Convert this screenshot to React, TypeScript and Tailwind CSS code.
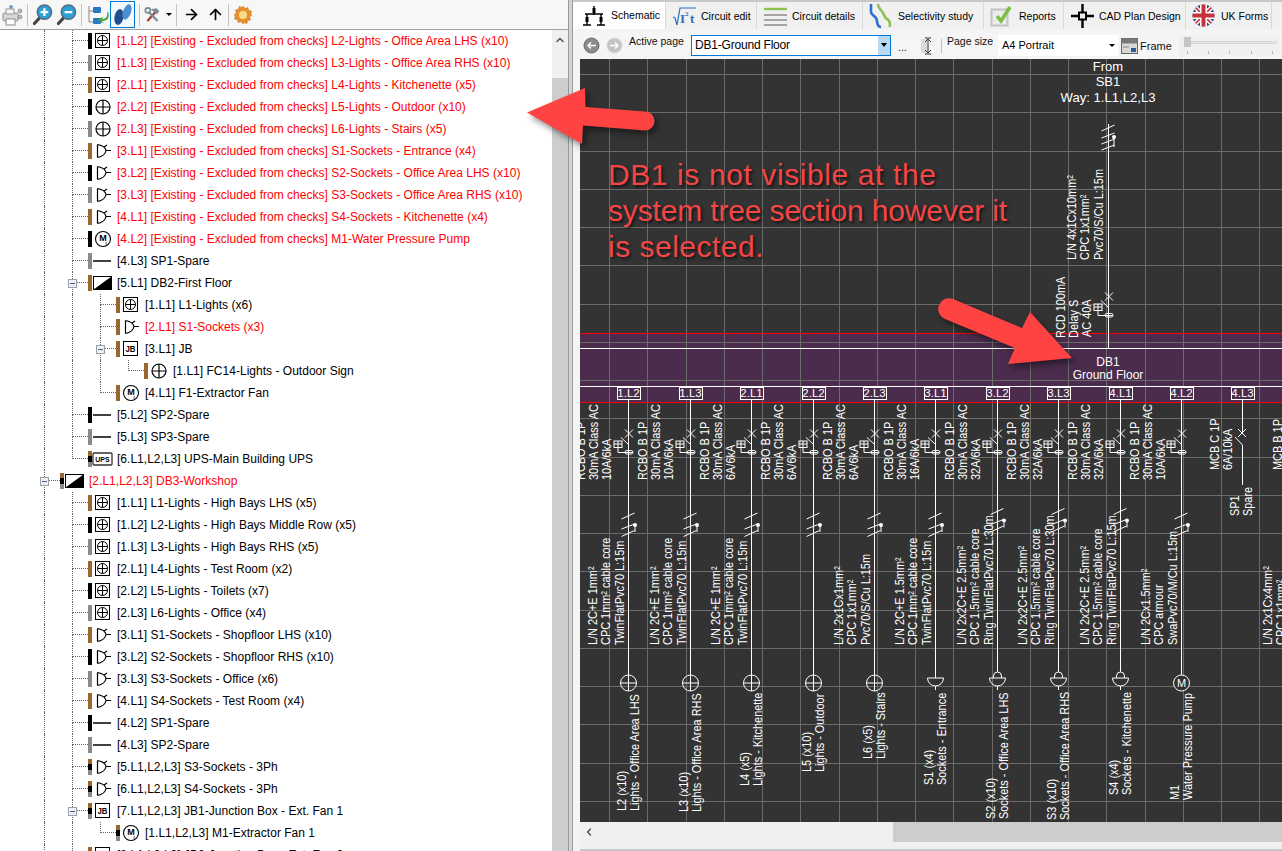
import React from "react";
import { ArrowRight, ArrowUp, ChevronUp, ChevronLeft, Minus } from "lucide-react";

type Phase = "1" | "2" | "3" | "s";
type Kind = "boxlamp" | "lamp" | "socket" | "motor" | "spare" | "db" | "jb" | "ups";
type Row = { d: number; p: Phase; k: Kind; t: string; red?: boolean; exp?: boolean; last?: boolean };

const ex = "[Existing - Excluded from checks] ";
const rows: Row[] = [
  { d: 2, p: "2", k: "boxlamp", red: true, t: `[1.L2] ${ex}L2-Lights - Office Area LHS (x10)` },
  { d: 2, p: "3", k: "boxlamp", red: true, t: `[1.L3] ${ex}L3-Lights - Office Area RHS (x10)` },
  { d: 2, p: "1", k: "boxlamp", red: true, t: `[2.L1] ${ex}L4-Lights - Kitchenette (x5)` },
  { d: 2, p: "2", k: "lamp", red: true, t: `[2.L2] ${ex}L5-Lights - Outdoor (x10)` },
  { d: 2, p: "3", k: "lamp", red: true, t: `[2.L3] ${ex}L6-Lights - Stairs (x5)` },
  { d: 2, p: "1", k: "socket", red: true, t: `[3.L1] ${ex}S1-Sockets - Entrance (x4)` },
  { d: 2, p: "2", k: "socket", red: true, t: `[3.L2] ${ex}S2-Sockets - Office Area LHS (x10)` },
  { d: 2, p: "3", k: "socket", red: true, t: `[3.L3] ${ex}S3-Sockets - Office Area RHS (x10)` },
  { d: 2, p: "1", k: "socket", red: true, t: `[4.L1] ${ex}S4-Sockets - Kitchenette (x4)` },
  { d: 2, p: "2", k: "motor", red: true, t: `[4.L2] ${ex}M1-Water Pressure Pump` },
  { d: 2, p: "3", k: "spare", t: "[4.L3] SP1-Spare" },
  { d: 2, p: "1", k: "db", exp: true, t: "[5.L1] DB2-First Floor" },
  { d: 3, p: "1", k: "boxlamp", t: "[1.L1] L1-Lights (x6)" },
  { d: 3, p: "1", k: "socket", red: true, t: "[2.L1] S1-Sockets (x3)" },
  { d: 3, p: "1", k: "jb", exp: true, t: "[3.L1] JB" },
  { d: 4, p: "1", k: "lamp", last: true, t: "[1.L1] FC14-Lights - Outdoor Sign" },
  { d: 3, p: "1", k: "motor", last: true, t: "[4.L1] F1-Extractor Fan" },
  { d: 2, p: "2", k: "spare", t: "[5.L2] SP2-Spare" },
  { d: 2, p: "3", k: "spare", t: "[5.L3] SP3-Spare" },
  { d: 2, p: "s", k: "ups", last: true, t: "[6.L1,L2,L3] UPS-Main Building UPS" },
  { d: 1, p: "s", k: "db", exp: true, red: true, t: "[2.L1,L2,L3] DB3-Workshop" },
  { d: 2, p: "1", k: "boxlamp", t: "[1.L1] L1-Lights - High Bays LHS (x5)" },
  { d: 2, p: "2", k: "boxlamp", t: "[1.L2] L2-Lights - High Bays Middle Row (x5)" },
  { d: 2, p: "3", k: "boxlamp", t: "[1.L3] L3-Lights - High Bays RHS (x5)" },
  { d: 2, p: "1", k: "boxlamp", t: "[2.L1] L4-Lights - Test Room (x2)" },
  { d: 2, p: "2", k: "boxlamp", t: "[2.L2] L5-Lights - Toilets (x7)" },
  { d: 2, p: "3", k: "boxlamp", t: "[2.L3] L6-Lights - Office (x4)" },
  { d: 2, p: "1", k: "socket", t: "[3.L1] S1-Sockets - Shopfloor LHS (x10)" },
  { d: 2, p: "2", k: "socket", t: "[3.L2] S2-Sockets - Shopfloor RHS (x10)" },
  { d: 2, p: "3", k: "socket", t: "[3.L3] S3-Sockets - Office (x6)" },
  { d: 2, p: "1", k: "socket", t: "[4.L1] S4-Sockets - Test Room (x4)" },
  { d: 2, p: "2", k: "spare", t: "[4.L2] SP1-Spare" },
  { d: 2, p: "3", k: "spare", t: "[4.L3] SP2-Spare" },
  { d: 2, p: "s", k: "socket", t: "[5.L1,L2,L3] S3-Sockets - 3Ph" },
  { d: 2, p: "s", k: "socket", t: "[6.L1,L2,L3] S4-Sockets - 3Ph" },
  { d: 2, p: "s", k: "jb", exp: true, t: "[7.L1,L2,L3] JB1-Junction Box - Ext. Fan 1" },
  { d: 3, p: "s", k: "motor", last: true, t: "[1.L1,L2,L3] M1-Extractor Fan 1" },
  { d: 2, p: "s", k: "jb", exp: true, t: "[8.L1,L2,L3] JB2-Junction Box - Ext. Fan 2" },
];

function PhaseBar({ p }: { p: Phase }) {
  if (p === "s")
    return (
      <span className="flex h-[16px] w-[4px] shrink-0 flex-col self-center">
        <span className="flex-1 bg-[#9c6633]" />
        <span className="flex-1 bg-black" />
        <span className="flex-1 bg-[#8a8a8a]" />
      </span>
    );
  const c = p === "1" ? "bg-[#9c6633]" : p === "2" ? "bg-black" : "bg-[#8a8a8a]";
  return <span className={`h-[16px] w-[4px] shrink-0 self-center ${c}`} />;
}

function TreeIcon({ k }: { k: Kind }) {
  const s = { fill: "none", stroke: "#000", strokeWidth: 1 };
  return (
    <svg width="22" height="18" viewBox="0 0 22 18" className="shrink-0">
      {k === "boxlamp" && (
        <g {...s}>
          <rect x="2.5" y="1.5" width="14" height="14" />
          <circle cx="9.5" cy="8.5" r="5" />
          <path d="M9.5 3.5v10M4.5 8.5h10" />
        </g>
      )}
      {k === "lamp" && (
        <g {...s} strokeWidth={1.2}>
          <circle cx="10" cy="9" r="7" />
          <path d="M10 2v14M3 9h14" />
        </g>
      )}
      {k === "socket" && (
        <g {...s} strokeWidth={1.2}>
          <path d="M4.5 2.5v13M4.5 2.5c5 1 8 3 8.5 6-.5 3-3.500 6-8.500 7" />
          <path d="M13 8.500h5M11 5l3-2" />
        </g>
      )}
      {k === "motor" && (
        <g>
          <circle cx="10" cy="9" r="7.500" fill="none" stroke="#000" strokeWidth="1.100" />
          <text x="10" y="11" textAnchor="middle" fontSize="9" fontWeight="700" fill="#000">M</text>
          <text x="13" y="15" textAnchor="middle" fontSize="4" fill="#000">3</text>
        </g>
      )}
      {k === "spare" && <path d="M0 9h18" stroke="#000" strokeWidth="1.500" />}
      {k === "db" && (
        <g>
          <rect x="1.500" y="2.500" width="18" height="13" fill="#fff" stroke="#000" />
          <path d="M1.500 15.500L19.500 2.500V15.500Z" fill="#000" />
        </g>
      )}
      {k === "jb" && (
        <g>
          <rect x="2.500" y="1.500" width="14" height="14" fill="#fff" stroke="#000" />
          <text x="9.500" y="12" textAnchor="middle" fontSize="9.500" fontWeight="700" fill="#000" textLength="10" lengthAdjust="spacingAndGlyphs">JB</text>
        </g>
      )}
      {k === "ups" && (
        <g>
          <rect x="1" y="3" width="19" height="12" rx="1" fill="#fff" stroke="#333" strokeWidth="1.300" />
          <text x="10.500" y="11.500" textAnchor="middle" fontSize="7" fontWeight="700" fill="#000">UPS</text>
        </g>
      )}
    </svg>
  );
}

function TreeRow({ r }: { r: Row }) {
  const guide = "border-l border-dotted border-[#666]";
  return (
    <div className="flex h-[22px] pl-[44px]">
      {Array.from({ length: r.d - 1 }).map((_, i) => (
        <span key={i} className={`w-[28px] shrink-0 ${guide}`} />
      ))}
      <span className="relative flex w-[16px] shrink-0 flex-col">
        <span className={`h-[11px] border-b ${guide}`} />
        {!r.last && <span className={`h-[11px] ${guide}`} />}
        {r.exp && (
          <span className="absolute left-[-4px] top-[7px] flex h-[9px] w-[9px] items-center justify-center border border-[#9aa0a8] bg-[#eef0f4]">
            <Minus size={7} strokeWidth={3} className="text-[#33457a]" />
          </span>
        )}
      </span>
      <PhaseBar p={r.p} />
      <span className={`flex shrink-0 items-center ${r.k === "db" || r.k === "ups" ? "w-[25px] pl-[0px]" : "w-[25px] pl-[1px]"}`}>
        <TreeIcon k={r.k} />
      </span>
      <span className={`whitespace-nowrap text-[12px] leading-[22px] tracking-[0.02px] ${r.red ? "text-[#ff0000]" : "text-black"}`}>{r.t}</span>
    </div>
  );
}

function Sep() {
  return <span className="mx-[4px] h-[22px] w-px shrink-0 bg-[#c4c4c4]" />;
}

function Magnifier({ plus }: { plus: boolean }) {
  return (
    <svg width="21" height="24" viewBox="0 0 22 24">
      <path d="M8 15L2.500 21" stroke="#444" strokeWidth="3.200" strokeLinecap="round" />
      <circle cx="13" cy="9" r="7.500" fill="#2f9fd8" stroke="#5c6b75" strokeWidth="1.600" />
      <path d={plus ? "M9 9h8M13 5v8" : "M9 9h8"} stroke="#fff" strokeWidth="2.400" />
    </svg>
  );
}

function LeftToolbar() {
  return (
    <div className="flex h-[30px] shrink-0 items-center border-b border-[#a0a0a0] bg-[#f7f7f7] pl-[2px]">
      <svg width="21" height="22" viewBox="0 0 21 22">
        <rect x="1" y="9" width="15" height="8" rx="1.500" fill="#d8d8d8" stroke="#8a8a8a" />
        <rect x="4" y="15" width="9" height="6" fill="#fff" stroke="#8a8a8a" />
        <rect x="4" y="5" width="8" height="5" fill="#f5f5f5" stroke="#9a9a9a" />
        <circle cx="9" cy="3" r="2" fill="#6aa7d8" />
        <circle cx="18" cy="7" r="2" fill="#bcbcbc" stroke="#777" strokeWidth=".6" />
        <circle cx="18" cy="13" r="2" fill="#bcbcbc" stroke="#777" strokeWidth=".6" />
      </svg>
      <Sep />
      <Magnifier plus />
      <span className="w-[3px]" />
      <Magnifier plus={false} />
      <Sep />
      <svg width="24" height="24" viewBox="0 0 24 24">
        <path d="M3 3v16M3 8h5M3 19h5" stroke="#8a8a8a" fill="none" />
        <rect x="7" y="4" width="8" height="6" rx="1" fill="#2a78c8" />
        <rect x="7" y="15" width="8" height="6" rx="1" fill="#2a78c8" />
        <path d="M21 9c1 5-1 7-5 7l1.500-2.500-6 3.500 6 3.500L16 18c6 0 8-4 6-9z" fill="#3fa535" />
      </svg>
      <span className="flex h-[27px] w-[25px] shrink-0 items-center justify-center border border-[#0078d7] bg-[#f3f8fd]">
        <svg width="22" height="24" viewBox="0 0 22 24">
          <ellipse cx="7" cy="14" rx="4.500" ry="8" transform="rotate(12 7 14)" fill="#1f4f8f" />
          <ellipse cx="15" cy="9" rx="4" ry="8" transform="rotate(20 15 9)" fill="#4f8fd0" />
        </svg>
      </span>
      <Sep />
      <svg width="17" height="18" viewBox="0 0 20 20">
        <path d="M4 17L13 7" stroke="#a33c2a" strokeWidth="2.600" />
        <path d="M9 3l6-1 3 4-3 3-6-5z" fill="#7a8a96" />
        <path d="M16 17L6 7" stroke="#7a8a96" strokeWidth="2.600" />
        <circle cx="4.500" cy="4.500" r="3" fill="none" stroke="#7a8a96" strokeWidth="2" />
      </svg>
      <span className="ml-[5px] h-0 w-0 border-x-[3px] border-t-[3px] border-x-transparent border-t-black" />
      <Sep />
      <ArrowRight size={17} strokeWidth={2.400} className="ml-[2px] text-black" />
      <span className="w-[7px]" />
      <ArrowUp size={17} strokeWidth={2.400} className="text-black" />
      <Sep />
      <svg width="18" height="18" viewBox="0 0 18 18" className="ml-[1px]">
        <path d="M9 0l2 2.500 3-1 .5 3 3 .5-1 3L18 9l-2.500 2 1 3-3 .5-.5 3-3-1L9 18l-2-2.500-3 1-.5-3-3-.5 1-3L0 9l2.500-2-1-3 3-.5.5-3 3 1z" fill="#e8912a" stroke="#b86a12" strokeWidth=".5" />
        <circle cx="9" cy="9" r="4" fill="#fbd98a" />
      </svg>
    </div>
  );
}

function Tab({ label, icon, active, w }: { label: string; icon: React.ReactNode; active?: boolean; w: string }) {
  return (
    <div className={`flex shrink-0 items-center border-r border-[#d9d9d9] ${w} ${active ? "h-[31px] bg-white pl-[9px]" : "h-[27px] bg-[#f0f0f0] pl-[6px]"}`}>
      <span className={`flex w-[29px] shrink-0 items-center ${active ? "mb-[4px]" : ""}`}>{icon}</span>
      <span className={`whitespace-nowrap text-[10.5px] text-black ${active ? "mb-[4px]" : "mt-[3px]"}`}>{label}</span>
    </div>
  );
}

function TabBar() {
  return (
    <div className="h-[29px] shrink-0 border-t-[2px] border-[#c8c8c8] bg-[#f0f0f0]">
      <div className="flex items-start">
        <Tab active w="w-[93px]" label="Schematic" icon={
          <svg width="24" height="22" viewBox="0 0 24 22">
            <path d="M12 1v9M3 9h18M5 9v11M19 9v11M1 20h8M15 20h8" stroke="#000" strokeWidth="1.400" fill="none" />
            <rect x="10.500" y="3" width="3" height="5" fill="#000" />
            <rect x="3.500" y="12" width="3" height="5" fill="#000" />
            <rect x="17.500" y="12" width="3" height="5" fill="#000" />
          </svg>} />
        <Tab w="w-[91px]" label="Circuit edit" icon={
          <svg width="26" height="20" viewBox="0 0 26 20">
            <path d="M1 11l2 1 2 7 3-17h16" stroke="#2a6fb8" strokeWidth="1.200" fill="none" />
            <text x="8" y="17" fontSize="13" fontWeight="700" fill="#2a6fb8" fontFamily="'Liberation Serif',serif">I</text>
            <text x="13" y="10" fontSize="7" fontWeight="700" fill="#2a6fb8" fontFamily="'Liberation Serif',serif">2</text>
            <text x="18" y="17" fontSize="13" fontWeight="700" fill="#2a6fb8" fontFamily="'Liberation Serif',serif">t</text>
          </svg>} />
        <Tab w="w-[106px]" label="Circuit details" icon={
          <svg width="24" height="20" viewBox="0 0 24 20">
            <path d="M1 3h23" stroke="#8dc24f" strokeWidth="2.400" />
            <path d="M1 9h23M1 14h23M1 19h23" stroke="#a5a5a5" strokeWidth="2" />
          </svg>} />
        <Tab w="w-[121px]" label="Selectivity study" icon={
          <svg width="24" height="26" viewBox="0 0 24 26">
            <path d="M2 1v8c0 3 3 3 5 6s0 9 5 9" stroke="#2f6fd0" strokeWidth="2.600" fill="none" />
            <path d="M9 1c0 5 3 5 5 9s2 5 4 6 3 2 3 8" stroke="#8dc24f" strokeWidth="2.600" fill="none" />
          </svg>} />
        <Tab w="w-[80px]" label="Reports" icon={
          <svg width="24" height="22" viewBox="0 0 24 22">
            <rect x="1.500" y="4.500" width="16" height="16" fill="#ececec" stroke="#c2c2c2" strokeWidth="2" />
            <path d="M7 11l4 5 9-14" stroke="#79c043" strokeWidth="3.600" fill="none" />
          </svg>} />
        <Tab w="w-[122px]" label="CAD Plan Design" icon={
          <svg width="25" height="24" viewBox="0 0 25 24">
            <path d="M12.500 0v8M12.500 16v8M1 12h7.500M16.500 12H24" stroke="#000" strokeWidth="2.400" />
            <rect x="9" y="8.500" width="7" height="7" fill="none" stroke="#000" strokeWidth="2" />
          </svg>} />
        <Tab w="w-[86px]" label="UK Forms" icon={
          <svg width="23" height="23" viewBox="0 0 23 23">
            <defs><clipPath id="ukc"><circle cx="11.500" cy="11.500" r="11" /></clipPath></defs>
            <g clipPath="url(#ukc)">
              <rect width="23" height="23" fill="#2a4a8a" />
              <path d="M0 0L23 23M23 0L0 23" stroke="#fff" strokeWidth="4.500" />
              <path d="M0 0L23 23M23 0L0 23" stroke="#c8303a" strokeWidth="1.600" />
              <path d="M11.500 0v23M0 11.500h23" stroke="#fff" strokeWidth="7" />
              <path d="M11.500 0v23M0 11.500h23" stroke="#c8303a" strokeWidth="4" />
            </g>
          </svg>} />
      </div>
    </div>
  );
}

function NavCircle({ faded }: { faded?: boolean }) {
  return (
    <svg width="17" height="17" viewBox="0 0 17 17">
      <circle cx="8.500" cy="8.500" r="7.500" fill={faded ? "#c4c4c4" : "#8c8c8c"} stroke={faded ? "#d8d8d8" : "#6a6a6a"} />
      <path d={faded ? "M4 8.500h8M9 5.500l3 3-3 3" : "M13 8.500H5M8 5.500l-3 3 3 3"} stroke="#fff" strokeWidth="1.500" fill="none" />
    </svg>
  );
}

function PageToolbar() {
  return (
    <div className="mt-[4px] flex h-[26px] shrink-0 items-center bg-[#f5f5f5] text-[10.5px] text-[#111]">
      <span className="mb-[2px] ml-[3px] flex"><NavCircle /></span>
      <span className="mb-[2px] ml-[6px] flex"><NavCircle faded /></span>
      <span className="mb-[8px] ml-[6px] w-[56px] shrink-0 whitespace-nowrap">Active page</span>
      <div className="mb-[2px] ml-[6px] flex h-[21px] w-[200px] shrink-0 items-center border border-[#0078d7] bg-white">
        <span className="flex-1 pl-[3px] text-[12px] tracking-[-0.2px] text-black">DB1-Ground Floor</span>
        <span className="flex h-full w-[12px] items-center justify-center bg-[#b8d8f4]">
          <span className="h-0 w-0 border-x-[3px] border-t-[4px] border-x-transparent border-t-black" />
        </span>
      </div>
      <span className="ml-[7px] mt-[4px] w-[20px] shrink-0">...</span>
      <svg width="14" height="18" viewBox="0 0 14 18" className="ml-[2px] shrink-0">
        <rect x="1" y="2" width="6" height="14" fill="#c8c8c8" opacity=".6" />
        <path d="M8 2v14M5 5l3-3 3 3M5 13l3 3 3-3M5 1h6M5 17h6" stroke="#333" fill="none" />
      </svg>
      <span className="ml-[7px] h-[14px] w-px shrink-0 bg-[#c0c0c0]" />
      <span className="mb-[8px] ml-[5px] w-[45px] shrink-0 whitespace-nowrap">Page size</span>
      <div className="mb-[2px] ml-[6px] flex h-[21px] w-[120px] shrink-0 items-center bg-white">
        <span className="flex-1 pl-[4px] text-[11px] text-black">A4 Portrait</span>
        <span className="mr-[3px] h-0 w-0 border-x-[3px] border-t-[3px] border-x-transparent border-t-black" />
      </div>
      <svg width="17" height="16" viewBox="0 0 17 16" className="ml-[3px] shrink-0">
        <rect x=".5" y=".5" width="16" height="15" fill="#d8d8d8" stroke="#666" />
        <rect x=".5" y=".5" width="16" height="5" fill="#7a7a7a" />
        <path d="M2 9h6" stroke="#888" />
        <rect x="10" y="10" width="5" height="4" fill="#2a5a9a" />
      </svg>
      <span className="ml-[2px] whitespace-nowrap text-[11px]">Frame</span>
      <div className="relative ml-[7px] h-[22px] w-[104px] shrink-0 bg-[#f0f0f0]">
        <span className="absolute left-[5px] top-[6px] h-[3px] w-[93px] border border-[#d8d8d8] bg-[#e6e6e6]" />
        <span className="absolute left-[5px] top-[2px] h-[10px] w-[7px] bg-[#c4c4c4]" />
        <div className="absolute left-[8px] top-[16px] flex w-[86px] justify-between">
          {[0, 1, 2, 3, 4].map((i) => <span key={i} className="h-[3px] w-px bg-[#b8b8b8]" />)}
        </div>
      </div>
    </div>
  );
}

function V({ x, y, t, sc = 0.84 }: { x: number; y: number; t: string; sc?: number }) {
  return (
    <text transform={`translate(${x} ${y}) rotate(-90) scale(${sc} 1)`} fontSize="13" fill="#fff">
      {t}
    </text>
  );
}

function Breaker({ x, dy = 0 }: { x: number; dy?: number }) {
  return (
    <g transform={`translate(${x} ${dy})`} fill="none" stroke="#fff" strokeWidth="1">
      <path d="M-3.500 429.500l8 8M4.500 429.500l-8 8" />
      <path d="M-7.500 437.500L0 444.500" />
      <rect x="-14.500" y="441" width="8" height="6.500" />
      <path d="M-10.500 441v6.500M-14.500 444h8" />
      <path d="M-10.500 447.500v5H4" />
      <rect x="-3.500" y="450.500" width="8" height="3.500" rx="1.700" />
    </g>
  );
}

function Ticks({ x, dy = 0 }: { x: number; dy?: number }) {
  return (
    <g transform={`translate(${x} ${dy})`} fill="none" stroke="#fff" strokeWidth="1">
      <path d="M-7 519l13-6M-7 529l13-5M-7 536.500l13-6M6.500 525v7" />
      <circle cx="6.500" cy="525" r="2" fill="#fff" stroke="none" />
    </g>
  );
}

const twin = ["L/N 2C+E 1mm²", "CPC  1mm² cable core", "TwinFlatPvc70 L:15m"];
const twin15 = ["L/N 2C+E 1.5mm²", "CPC  1mm² cable core", "TwinFlatPvc70 L:15m"];
const ring30 = ["L/N 2x2C+E 2.5mm²", "CPC  1.5mm² cable core", "Ring TwinFlatPvc70 L:30m"];
const ring15 = ["L/N 2x2C+E 2.5mm²", "CPC  1.5mm² cable core", "Ring TwinFlatPvc70 L:15m"];

type Col = { way: string; rating?: string; cable?: string[]; a?: string; b?: string; end?: number; sym?: "lamp" | "socket" | "socketFlat" | "motor"; up?: boolean };
const cols: Col[] = [
  { way: "1.L2", rating: "10A/6kA", cable: twin, a: "L2 (x10)", b: "Lights - Office Area LHS", end: 811, sym: "lamp" },
  { way: "1.L3", rating: "6A/6kA", cable: twin, a: "L3 (x10)", b: "Lights - Office Area RHS", end: 812, sym: "lamp" },
  { way: "2.L1", rating: "6A/6kA", cable: twin, a: "L4 (x5)", b: "Lights - Kitchenette", end: 786, sym: "lamp" },
  { way: "2.L2", rating: "6A/6kA", a: "L5 (x10)", b: "Lights - Outdoor", end: 772, sym: "lamp" },
  { way: "2.L3", rating: "16A/6kA", cable: ["L/N 2x1Cx1mm²", "CPC  1x1mm²", "Pvc70/S/Cu L:15m"], a: "L6 (x5)", b: "Lights - Stairs", end: 759, sym: "lamp" },
  { way: "3.L1", rating: "32A/6kA", cable: twin15, a: "S1 (x4)", b: "Sockets - Entrance", end: 785, sym: "socketFlat" },
  { way: "3.L2", rating: "32A/6kA", cable: ring30, a: "S2 (x10)", b: "Sockets - Office Area LHS", end: 819, sym: "socket", up: true },
  { way: "3.L3", rating: "32A/6kA", cable: ring30, a: "S3 (x10)", b: "Sockets - Office Area RHS", end: 820, sym: "socket", up: true },
  { way: "4.L1", rating: "10A/6kA", cable: ring15, a: "S4 (x4)", b: "Sockets - Kitchenette", end: 795, sym: "socket", up: true },
  { way: "4.L2", cable: ["L/N 2Cx1.5mm²", "CPC armour", "SwaPvc70/M/Cu L:15m"], a: "M1", b: "Water Pressure Pump", end: 800, sym: "motor" },
];

function Schematic() {
  const vx = Array.from({ length: 18 }).map((_, i) => Math.round(609 + i * 38.25) + 0.5);
  const hy = Array.from({ length: 20 }).map((_, i) => Math.round(74 + i * 38.25) + 0.5);
  return (
    <svg width="702" height="763" viewBox="580 59 702 763" className="block">
      <rect x="580" y="59" width="702" height="763" fill="#333333" />
      <rect x="580" y="333" width="702" height="70" fill="#4b2c4d" />
      <g stroke="#6b6b6b" strokeWidth="1" shapeRendering="crispEdges">
        {vx.map((x) => <line key={x} x1={x} x2={x} y1="59" y2="822" />)}
        {hy.map((y) => <line key={y} x1="580" x2="1282" y1={y} y2={y} />)}
      </g>
      <g shapeRendering="crispEdges">
        <line x1="580" x2="1282" y1="333.500" y2="333.500" stroke="#ff0000" />
        <line x1="580" x2="1282" y1="402.500" y2="402.500" stroke="#ff0000" strokeWidth="1.500" />
        <line x1="580" x2="1282" y1="348.500" y2="348.500" stroke="#fff" />
        <line x1="580" x2="1282" y1="386.500" y2="386.500" stroke="#fff" />
        <line x1="1108.500" x2="1108.500" y1="124" y2="348" stroke="#fff" />
      </g>

      <g fill="#fff" fontSize="13" textAnchor="middle">
        <text x="1108" y="71">From</text>
        <text x="1108" y="86">SB1</text>
        <text x="1108" y="102" textLength="95" lengthAdjust="spacingAndGlyphs">Way: 1.L1,L2,L3</text>
      </g>
      <g transform="translate(1108.500 -388)" fill="none" stroke="#fff">
        <path d="M-7 519l13-6M-7 526l13-5M-7 532l13-5M-7 538l13-5M5.500 525v10" />
        <circle cx="5.500" cy="525" r="2" fill="#fff" stroke="none" />
      </g>
      <Breaker x={1108.500} dy={-137} />
      <V x={1076} y={260} t="L/N 4x1Cx10mm²" />
      <V x={1089} y={260} t="CPC  1x1mm²" />
      <V x={1103} y={260} t="Pvc70/S/Cu L:15m" />
      <V x={1065} y={338} t="RCD 100mA" />
      <V x={1078} y={338} t="Delay S" />
      <V x={1091} y={337} t="AC 40A" />
      <g fill="#fff" fontSize="12" textAnchor="middle">
        <text x="1108" y="366">DB1</text>
        <text x="1108" y="379">Ground Floor</text>
      </g>

      {/* column clipped at the left edge of the view */}
      <V x={585} y={480} t="RCBO B 1P" />
      <V x={597.500} y={480} t="30mA Class AC" />
      <V x={610.500} y={480} t="10A/6kA" />

      {cols.map((c, i) => {
        const x = Math.round(628.3 + i * 61.4) + 0.5;
        const endY = c.sym === "socket" ? 672 : c.sym === "socketFlat" ? 678 : 675;
        return (
          <g key={c.way}>
            <line x1={x} x2={x} y1="399" y2={endY} stroke="#fff" shapeRendering="crispEdges" />
            <rect x={x - 11.500} y="387" width="23" height="12" fill="#4b2c4d" stroke="#fff" shapeRendering="crispEdges" />
            <text x={x} y="397" textAnchor="middle" fontSize="11.500" fill="#fff">{c.way}</text>
            <Breaker x={x} />
            <Ticks x={x} dy={c.up ? -4.500 : 0} />
            {c.rating && (
              <>
                <V x={x + 18.500} y={480} t="RCBO B 1P" />
                <V x={x + 31} y={480} t="30mA Class AC" />
                <V x={x + 44} y={480} t={c.rating} />
              </>
            )}
            {c.cable && (
              <>
                <V x={x - 31.500} y={645} t={c.cable[0]} />
                <V x={x - 18.500} y={645} t={c.cable[1]} />
                <V x={x - 5} y={645} t={c.cable[2]} />
              </>
            )}
            {c.sym === "lamp" && (
              <g fill="none" stroke="#fff">
                <circle cx={x} cy="683" r="8" />
                <path d={`M${x} 675v16M${x - 8} 683h16`} />
              </g>
            )}
            {(c.sym === "socket" || c.sym === "socketFlat") && (
              <g fill="none" stroke="#fff">
                <path d={`M${x - 8} 678H${x + 8}A8 8 0 0 1 ${x - 8} 678M${x} 686v4`} />
                {c.sym === "socket" && <path d={`M${x - 4} 678v-2A4 4 0 0 1 ${x + 4} 676v2`} />}
              </g>
            )}
            {c.sym === "motor" && (
              <g>
                <circle cx={x} cy="683" r="8" fill="#333" stroke="#fff" />
                <text x={x} y="687" textAnchor="middle" fontSize="11" fill="#fff">M</text>
              </g>
            )}
            <V x={x - 3} y={c.end!} t={c.a!} />
            <V x={x + 10} y={c.end!} t={c.b!} />
          </g>
        );
      })}

      {/* 4.L3 spare way */}
      <g>
        <line x1="1242.500" x2="1242.500" y1="399" y2="433" stroke="#fff" shapeRendering="crispEdges" />
        <rect x="1231" y="387" width="23" height="12" fill="#4b2c4d" stroke="#fff" shapeRendering="crispEdges" />
        <text x="1242.500" y="397" textAnchor="middle" fontSize="11.500" fill="#fff">4.L3</text>
        <path d="M1238 429l8 8M1246 429l-8 8M1235 437l7.500 8" stroke="#fff" fill="none" />
        <line x1="1242.500" x2="1242.500" y1="445" y2="485" stroke="#fff" />
        <V x={1219} y={470} t="MCB C 1P" />
        <V x={1232} y={470} t="6A/10kA" />
        <V x={1239} y={516} t="SP1" />
        <V x={1252} y={516} t="Spare" />
        <V x={1282} y={470} t="MCB B 1P" />
        <V x={1272} y={645} t="L/N 2x1Cx4mm²" />
        <V x={1285} y={645} t="CPC  1x1mm²" />
      </g>
    </svg>
  );
}

export default function App() {
  return (
    <div className="relative flex h-screen w-full overflow-hidden bg-[#f0f0f0] font-['Liberation_Sans',sans-serif]">
      <div className="flex h-full w-[568px] shrink-0 flex-col">
        <LeftToolbar />
        <div className="flex min-h-0 flex-1">
          <div className="w-[552px] shrink-0 overflow-hidden bg-white">
            {rows.map((r, i) => <TreeRow key={i} r={r} />)}
          </div>
          <div className="flex w-[16px] shrink-0 flex-col bg-[#f0f0f0]">
            <span className="flex h-[20px] items-center justify-center">
              <ChevronUp size={12} strokeWidth={3} className="text-[#555]" />
            </span>
            <span className="mt-[28px] flex-1 bg-[#cdcdcd]" />
          </div>
        </div>
      </div>
      <div className="h-full w-[5px] shrink-0 border-x border-[#999] bg-[#d4d4d4]" />
      <div className="flex h-full min-w-0 flex-1 flex-col bg-white">
        <TabBar />
        <div className="flex min-h-0 flex-1 flex-col bg-[#f4f4f4] pl-[7px]">
          <PageToolbar />
          <div className="h-[763px] shrink-0 overflow-hidden">
            <Schematic />
          </div>
          <div className="flex h-[20px] shrink-0 bg-[#f0f0f0]">
            <span className="flex w-[17px] items-center justify-center">
              <ChevronLeft size={12} strokeWidth={3} className="text-[#555]" />
            </span>
            <span className="ml-[296px] flex-1 bg-[#cdcdcd]" />
          </div>
          <div className="h-[7px] shrink-0 bg-[#f0f0f0]" />
          <div className="h-[2px] shrink-0 bg-[#c8c8c8]" />
        </div>
      </div>

      <svg width="1282" height="851" viewBox="0 0 1282 851" className="pointer-events-none absolute left-0 top-0 drop-shadow-[3px_4px_3px_rgba(0,0,0,0.45)]">
        <path d="M527 112.500L585 88L585.500 107L645 111.500A9.500 9.500 0 0 1 645 130.500L583 125.500L582 144Z" fill="#ff4343" />
        <path d="M1072 358L1030 312L1022 328L953 299A10 10 0 0 0 945 319L1015 348L1008 364Z" fill="#ff4343" />
      </svg>
      <div className="pointer-events-none absolute left-[608px] top-[157px] whitespace-nowrap text-[30px] leading-[36px] text-[#f54545] [text-shadow:2px_2px_3px_rgba(0,0,0,0.6)]">
        <span className="block tracking-[0.6px]">DB1 is not visible at the</span>
        <span className="block tracking-[-0.15px]">system tree section however it</span>
        <span className="block tracking-[0.5px]">is selected.</span>
      </div>
    </div>
  );
}
